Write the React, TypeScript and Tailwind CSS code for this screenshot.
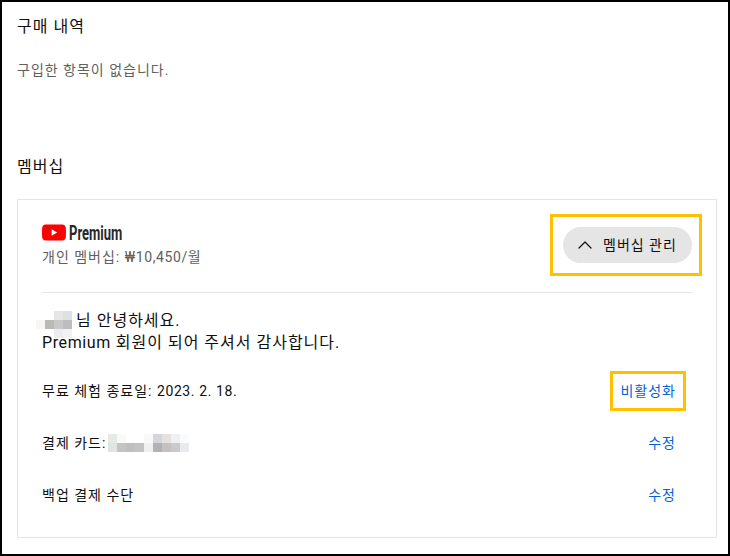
import { ChevronUp } from 'lucide-react';
import type React from 'react';

const FONT = "font-['Roboto','Noto_Sans_CJK_KR',sans-serif]";

const NAME_BLUR = [
  ['transparent', 'transparent', '#e6e6e8', '#dfe0e3'],
  ['#f7f6f5', '#b9b9b8', '#c9c9c9', '#bdbdbd'],
  ['transparent', 'transparent', '#ecedee', '#f2f2f3'],
];

const CARD_BLUR = [
  ['#e6eae6', '#f8f9f8', 'transparent', 'transparent', '#f9f9f9', '#d5d5da', '#e5e1e1', '#eff0f0', '#fafbfc'],
  ['#dfe5df', '#c4c4c4', '#c0bfbf', '#c4c3c3', '#f0f1ef', '#b2b2b6', '#c6c1c1', '#cacaca', '#e9eaee'],
];

const Blur: React.FC<{ rows: string[][] }> = ({ rows }) => (
  <span className="inline-flex flex-col">
    {rows.map((row, i) => (
      <span key={i} className="flex">
        {row.map((color, j) => (
          <span key={j} className="h-[9px] w-[9px]" style={{ backgroundColor: color }} />
        ))}
      </span>
    ))}
  </span>
);

const Latin: React.FC<{ children: React.ReactNode }> = ({ children }) => (
  <span className="tracking-[0.6px]">{children}</span>
);

const Row: React.FC<{ link: string; highlight?: boolean; children: React.ReactNode }> = ({ link, highlight, children }) => (
  <div className="flex h-[52px] items-center justify-between pr-4 text-sm text-[#0f0f0f]">
    <div className="flex items-center">{children}</div>
    <div className="relative text-[#065fd4]">
      {link}
      {highlight && <div className="absolute -inset-x-[10px] -inset-y-[10px] border-[3px] border-[#ffc000]" />}
    </div>
  </div>
);

export default function App() {
  return (
    <div className={`${FONT} h-[556px] w-[730px] overflow-hidden border-2 border-black bg-white px-[15px] pt-[14px] tracking-[1px]`}>
      <h2 className="text-base leading-[22px] text-[#0f0f0f]">구매 내역</h2>
      <p className="mt-[22px] text-sm leading-[20px] text-[#606060]">구입한 항목이 없습니다.</p>
      <h2 className="mt-[76px] text-base leading-[22px] text-[#0f0f0f]">멤버십</h2>

      <section className="mt-[21px] h-[339px] w-[700px] border border-[#e5e5e5] px-6">
        <div className="flex h-[93px] items-center justify-between border-b border-[#e5e5e5] pb-[3px]">
          <div>
            <div className="flex h-[20px] items-center gap-[3px]">
              <svg width="24" height="17" viewBox="0 0 24 17">
                <path
                  d="M3.600 0.400h16.800c1.900 0 3.300 1.400 3.400 3.300.1 1.600.2 3.200.2 4.800s-.1 3.200-.2 4.800c-.1 1.900-1.500 3.300-3.400 3.300H3.600C1.700 16.600.3 15.200.2 13.300.1 11.700 0 10.100 0 8.500s.1-3.200.2-4.800C.3 1.800 1.700.4 3.600.4z"
                  fill="#ff0000"
                />
                <path d="M9.600 5.200v6.600l5.600-3.300z" fill="#ffffff" />
              </svg>
              <span className="origin-left scale-x-[0.65] font-['Roboto'] text-[20px] font-bold leading-none tracking-normal text-[#282828]">
                Premium
              </span>
            </div>
            <p className="mt-[4px] text-sm leading-[20px] text-[#606060]">
              개인 멤버십: <Latin>₩10,450/</Latin>월
            </p>
          </div>
          <div className="relative">
            <button className="flex h-9 w-[129px] items-center rounded-full bg-[#e5e5e5] pl-[10px] text-sm text-[#0f0f0f]">
              <ChevronUp size={24} strokeWidth={1.2} className="mr-[6px]" />
              멤버십 관리
            </button>
            <div className="absolute -bottom-[13px] -left-[13px] -right-[10px] -top-[13px] border-[3px] border-[#ffc000]" />
          </div>
        </div>

        <div className="mt-[17px] text-base leading-[22px] text-[#0f0f0f]">
          <div className="flex h-[22px] items-center">
            <span className="-ml-[6px] mr-[4px]">
              <Blur rows={NAME_BLUR} />
            </span>
            님 안녕하세요.
          </div>
          <p>
            <Latin>Premium</Latin> 회원이 되어 주셔서 감사합니다.
          </p>
        </div>

        <div className="mt-[11px]">
          <Row link="비활성화" highlight>
            <span>
              무료 체험 종료일: <Latin>2023. 2. 18.</Latin>
            </span>
          </Row>
          <Row link="수정">
            <span className="mr-[2px]">결제 카드:</span>
            <span className="-translate-y-[3px]">
              <Blur rows={CARD_BLUR} />
            </span>
          </Row>
          <Row link="수정">백업 결제 수단</Row>
        </div>
      </section>
    </div>
  );
}
